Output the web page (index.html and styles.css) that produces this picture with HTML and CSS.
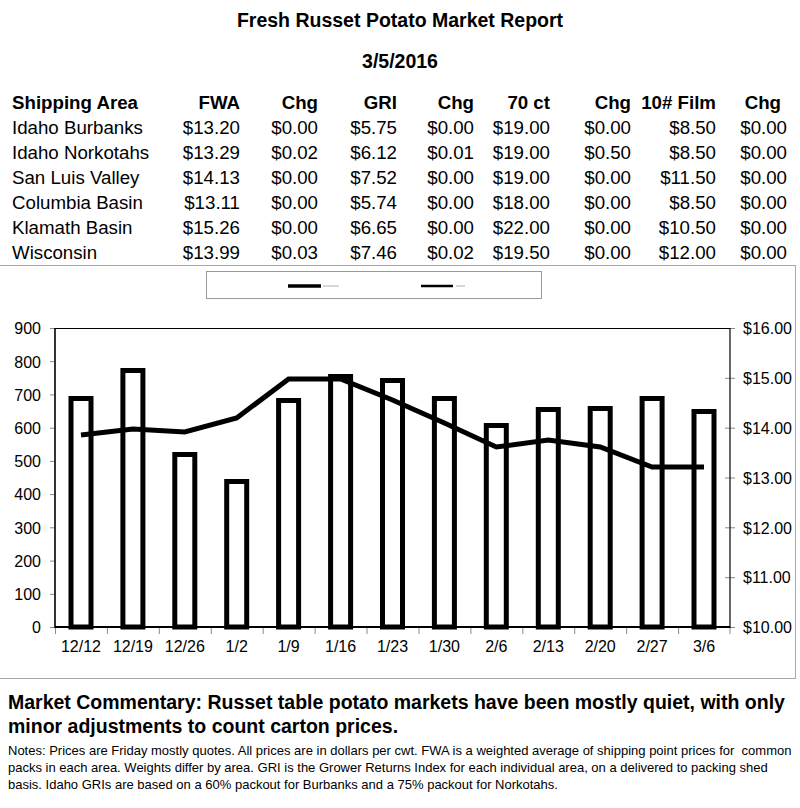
FILE: index.html
```html
<!DOCTYPE html>
<html>
<head>
<meta charset="utf-8">
<title>Fresh Russet Potato Market Report</title>
<link rel="stylesheet" href="styles.css">
</head>
<body>
<header class="report-head">
  <h1 class="title">Fresh Russet Potato Market Report</h1>
  <div class="date">3/5/2016</div>
</header>

<div class="price-table">
  <div class="row head">
    <span class="area">Shipping Area</span><span>FWA</span><span>Chg</span><span>GRI</span><span>Chg</span><span>70 ct</span><span>Chg</span><span>10# Film</span><span class="last-head">Chg</span>
  </div>
  <div class="row">
    <span class="area">Idaho Burbanks</span><span>$13.20</span><span>$0.00</span><span>$5.75</span><span>$0.00</span><span>$19.00</span><span>$0.00</span><span>$8.50</span><span>$0.00</span>
  </div>
  <div class="row">
    <span class="area">Idaho Norkotahs</span><span>$13.29</span><span>$0.02</span><span>$6.12</span><span>$0.01</span><span>$19.00</span><span>$0.50</span><span>$8.50</span><span>$0.00</span>
  </div>
  <div class="row">
    <span class="area">San Luis Valley</span><span>$14.13</span><span>$0.00</span><span>$7.52</span><span>$0.00</span><span>$19.00</span><span>$0.00</span><span>$11.50</span><span>$0.00</span>
  </div>
  <div class="row">
    <span class="area">Columbia Basin</span><span>$13.11</span><span>$0.00</span><span>$5.74</span><span>$0.00</span><span>$18.00</span><span>$0.00</span><span>$8.50</span><span>$0.00</span>
  </div>
  <div class="row">
    <span class="area">Klamath Basin</span><span>$15.26</span><span>$0.00</span><span>$6.65</span><span>$0.00</span><span>$22.00</span><span>$0.00</span><span>$10.50</span><span>$0.00</span>
  </div>
  <div class="row">
    <span class="area">Wisconsin</span><span>$13.99</span><span>$0.03</span><span>$7.46</span><span>$0.02</span><span>$19.50</span><span>$0.00</span><span>$12.00</span><span>$0.00</span>
  </div>
</div>

<section class="chart-box">
  <svg class="chart" width="795" height="412" viewBox="0 0 795 412" xmlns="http://www.w3.org/2000/svg">
    <!-- legend -->
    <rect x="206.5" y="5.5" width="335" height="27" fill="#fff" stroke="#9a9a9a" stroke-width="1"/>
    <line x1="288" y1="20" x2="321" y2="20" stroke="#000" stroke-width="3.5"/>
    <line x1="323" y1="20" x2="339" y2="20" stroke="#b0b0b0" stroke-width="1"/>
    <line x1="421" y1="20" x2="453" y2="20" stroke="#000" stroke-width="2.5"/>
    <line x1="456" y1="20" x2="465" y2="20" stroke="#b0b0b0" stroke-width="1"/>

    <!-- left ticks -->
    <g stroke="#8a8a8a" stroke-width="1">
      <line x1="50" y1="361.5" x2="55" y2="361.5"/>
      <line x1="50" y1="328.3" x2="55" y2="328.3"/>
      <line x1="50" y1="295.1" x2="55" y2="295.1"/>
      <line x1="50" y1="261.8" x2="55" y2="261.8"/>
      <line x1="50" y1="228.6" x2="55" y2="228.6"/>
      <line x1="50" y1="195.4" x2="55" y2="195.4"/>
      <line x1="50" y1="162.2" x2="55" y2="162.2"/>
      <line x1="50" y1="128.9" x2="55" y2="128.9"/>
      <line x1="50" y1="95.7" x2="55" y2="95.7"/>
      <line x1="50" y1="62.5" x2="55" y2="62.5"/>
      <!-- right ticks -->
      <line x1="725" y1="361.5" x2="735" y2="361.5"/>
      <line x1="725" y1="311.7" x2="735" y2="311.7"/>
      <line x1="725" y1="261.8" x2="735" y2="261.8"/>
      <line x1="725" y1="212" x2="735" y2="212"/>
      <line x1="725" y1="162.2" x2="735" y2="162.2"/>
      <line x1="725" y1="112.3" x2="735" y2="112.3"/>
      <line x1="725" y1="62.5" x2="735" y2="62.5"/>
      <!-- x ticks -->
      <line x1="55.5" y1="361" x2="55.5" y2="368"/>
      <line x1="107.4" y1="361" x2="107.4" y2="368"/>
      <line x1="159.3" y1="361" x2="159.3" y2="368"/>
      <line x1="211.3" y1="361" x2="211.3" y2="368"/>
      <line x1="263.2" y1="361" x2="263.2" y2="368"/>
      <line x1="315.1" y1="361" x2="315.1" y2="368"/>
      <line x1="367" y1="361" x2="367" y2="368"/>
      <line x1="419" y1="361" x2="419" y2="368"/>
      <line x1="470.9" y1="361" x2="470.9" y2="368"/>
      <line x1="522.8" y1="361" x2="522.8" y2="368"/>
      <line x1="574.7" y1="361" x2="574.7" y2="368"/>
      <line x1="626.6" y1="361" x2="626.6" y2="368"/>
      <line x1="678.6" y1="361" x2="678.6" y2="368"/>
      <line x1="730" y1="361" x2="730" y2="368"/>
    </g>

    <!-- left axis labels -->
    <g class="axis-text" text-anchor="end">
      <text x="41" y="367">0</text>
      <text x="41" y="334">100</text>
      <text x="41" y="300.8">200</text>
      <text x="41" y="267.6">300</text>
      <text x="41" y="234.4">400</text>
      <text x="41" y="201.2">500</text>
      <text x="41" y="168">600</text>
      <text x="41" y="134.7">700</text>
      <text x="41" y="101.5">800</text>
      <text x="41" y="68.3">900</text>
    </g>
    <!-- right axis labels -->
    <g class="axis-text">
      <text x="743" y="367">$10.00</text>
      <text x="743" y="317.4">$11.00</text>
      <text x="743" y="267.6">$12.00</text>
      <text x="743" y="217.8">$13.00</text>
      <text x="743" y="168">$14.00</text>
      <text x="743" y="118.1">$15.00</text>
      <text x="743" y="68.3">$16.00</text>
    </g>
    <!-- x labels -->
    <g class="axis-text" text-anchor="middle">
      <text x="81" y="386">12/12</text>
      <text x="132.9" y="386">12/19</text>
      <text x="184.8" y="386">12/26</text>
      <text x="236.7" y="386">1/2</text>
      <text x="288.6" y="386">1/9</text>
      <text x="340.6" y="386">1/16</text>
      <text x="392.5" y="386">1/23</text>
      <text x="444.4" y="386">1/30</text>
      <text x="496.3" y="386">2/6</text>
      <text x="548.3" y="386">2/13</text>
      <text x="600.2" y="386">2/20</text>
      <text x="652.1" y="386">2/27</text>
      <text x="704" y="386">3/6</text>
    </g>

    <!-- bars -->
    <g fill="#fff" stroke="#000" stroke-width="5">
      <rect x="71" y="132.5" width="20" height="228.5"/>
      <rect x="122.9" y="104.5" width="20" height="256.5"/>
      <rect x="174.8" y="188.5" width="20" height="172.5"/>
      <rect x="226.7" y="215.5" width="20" height="145.5"/>
      <rect x="278.6" y="134.5" width="20" height="226.5"/>
      <rect x="330.6" y="110.5" width="20" height="250.5"/>
      <rect x="382.5" y="114.5" width="20" height="246.5"/>
      <rect x="434.4" y="132.5" width="20" height="228.5"/>
      <rect x="486.3" y="159.5" width="20" height="201.5"/>
      <rect x="538.3" y="143.5" width="20" height="217.5"/>
      <rect x="590.2" y="142.5" width="20" height="218.5"/>
      <rect x="642.1" y="132.5" width="20" height="228.5"/>
      <rect x="694" y="145.5" width="20" height="215.5"/>
    </g>

    <!-- plot frame -->
    <g stroke="#000" fill="none">
      <line x1="55" y1="62.5" x2="730" y2="62.5" stroke-width="1.2"/>
      <line x1="730" y1="62" x2="730" y2="362" stroke-width="1.2"/>
      <line x1="55" y1="62" x2="55" y2="362" stroke-width="1.6"/>
      <line x1="55" y1="361" x2="730" y2="361" stroke-width="2"/>
    </g>

    <!-- price line -->
    <polyline fill="none" stroke="#000" stroke-width="5" stroke-linejoin="miter"
      points="81,169 132.9,163 184.8,166 236.7,152 288.6,113 340.6,113 392.5,134 444.4,157 496.3,181 548.3,174 600.2,181 652.1,201 704,201"/>
  </svg>
</section>

<section class="commentary">
  <p class="lead">Market Commentary: Russet table potato markets have been mostly quiet, with only<br>minor adjustments to count carton prices.</p>
  <p class="notes">Notes: Prices are Friday mostly quotes. All prices are in dollars per cwt. FWA is a weighted average of shipping point prices for&nbsp; common<br>packs in each area. Weights differ by area. GRI is the Grower Returns Index for each individual area, on a delivered to packing shed<br>basis. Idaho GRIs are based on a 60% packout for Burbanks and a 75% packout for Norkotahs.</p>
</section>
</body>
</html>
```

FILE: styles.css
```css
html, body {
  margin: 0;
  padding: 0;
  background: #fff;
}

body {
  width: 800px;
  height: 808px;
  overflow: hidden;
  font-family: "Liberation Sans", Arial, sans-serif;
  color: #000;
}

.report-head {
  height: 90px;
  text-align: center;
}

.title {
  margin: 0;
  font-size: 19.5px;
  font-weight: bold;
  line-height: 40px;
  height: 40px;
}

.date {
  font-size: 19.5px;
  font-weight: bold;
  line-height: 42px;
  height: 42px;
}

.price-table {
  padding-left: 12px;
  font-size: 18.7px;
}

.row {
  display: grid;
  grid-template-columns: 148px 80px 78px 79px 77px 76px 81px 85px 71px;
  height: 25px;
  line-height: 25px;
  white-space: nowrap;
}

.row span {
  text-align: right;
}

.row span.area {
  text-align: left;
}

.row.head {
  font-weight: bold;
}

.row.head .last-head {
  padding-right: 6px;
}

.chart-box {
  width: 795px;
  height: 412px;
  border-top: 1px solid #a8a8a8;
  border-right: 1px solid #a8a8a8;
  border-bottom: 1px solid #a8a8a8;
}

.chart {
  display: block;
}

.axis-text {
  font-family: "Liberation Sans", Arial, sans-serif;
  font-size: 16px;
  fill: #000;
}

.commentary {
  padding: 11px 0 0 8px;
}

.lead {
  margin: 0;
  font-size: 19.5px;
  font-weight: bold;
  line-height: 24px;
  white-space: nowrap;
}

.notes {
  margin: 4px 0 0 0;
  font-size: 13px;
  line-height: 17px;
  white-space: nowrap;
}
```
